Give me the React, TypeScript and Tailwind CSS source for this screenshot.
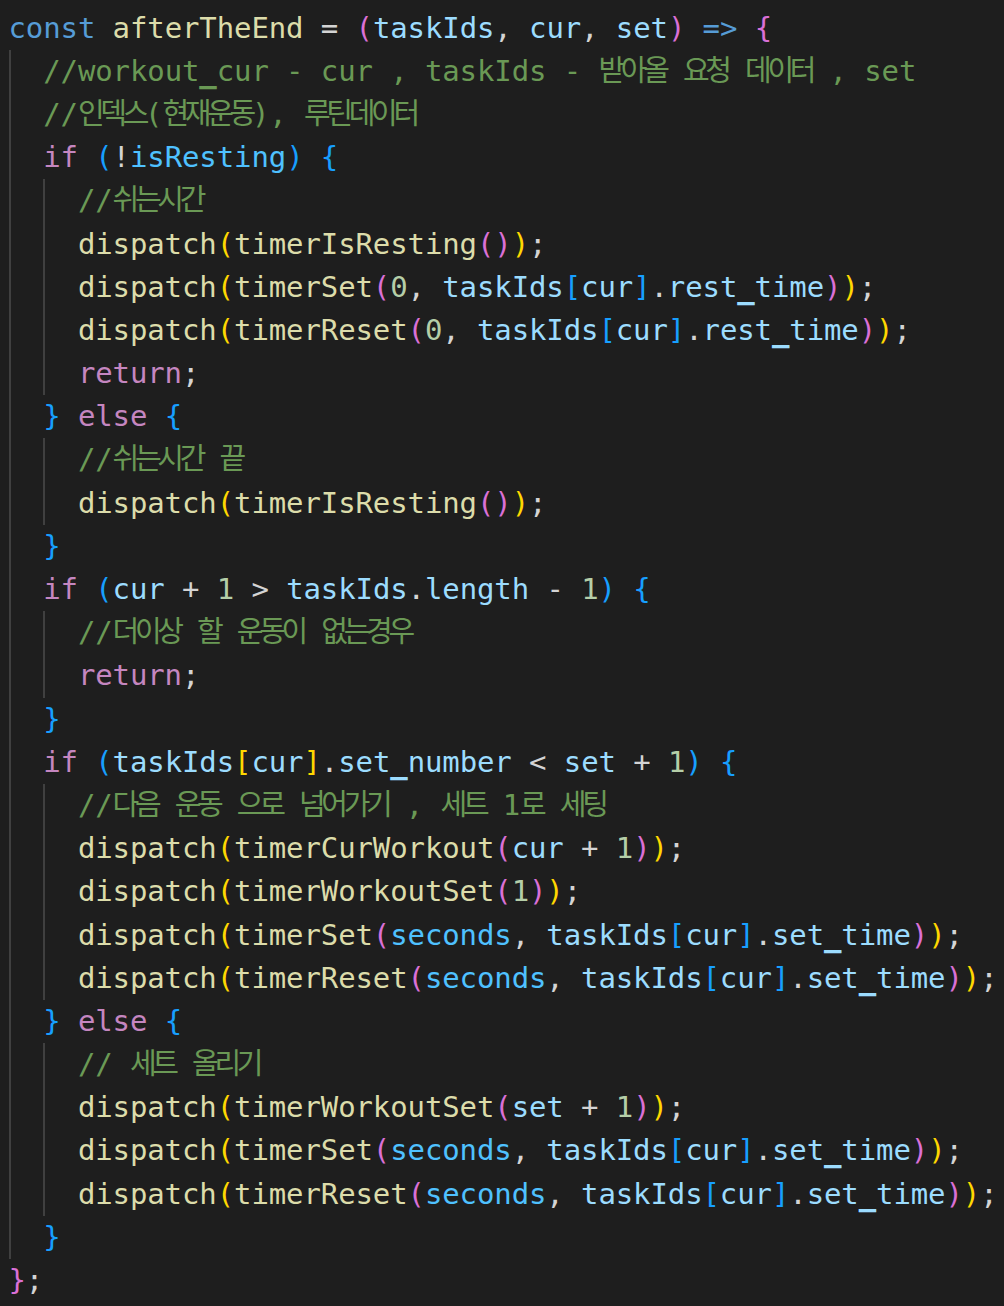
import React from 'react';

type Tok = [string, string];

// VS Code Dark+ token colours
const COLOR: Record<string, string> = {
  k: 'text-[#569cd6]', // const, =>
  c: 'text-[#c586c0]', // if / else / return
  f: 'text-[#dcdcaa]', // functions
  v: 'text-[#9cdcfe]', // variables
  b: 'text-[#4fc1ff]', // constants
  n: 'text-[#b5cea8]', // numbers
  p: 'text-[#d4d4d4]', // punctuation
  g: 'text-[#6a9955]', // comments
  y: 'text-[#ffd700]', // bracket depth gold
  o: 'text-[#da70d6]', // bracket depth orchid
  u: 'text-[#179fff]', // bracket depth blue
};

const SPLIT = /([\uAC00-\uD7A3]+|_)/;
const HANGUL = /[\uAC00-\uD7A3]/;

// hangul runs get narrowed to the editor's cell rhythm, underscores a bit heavier
const renderText = (text: string) =>
  text.split(SPLIT).map((part, i) => {
    if (HANGUL.test(part)) {
      return (
        <span key={i} className="tracking-[-4.3px] leading-[30px]">
          {part}
        </span>
      );
    }
    if (part === '_') {
      return (
        <span key={i} className="[text-shadow:0_1px_0_currentColor,0_-1px_0_currentColor]">
          _
        </span>
      );
    }
    return part;
  });

const dispatchSet = (fn: string, first: Tok, prop: string): Tok[] => [
  ['f', 'dispatch'], ['y', '('], ['f', fn], ['o', '('], first, ['p', ', '],
  ['v', 'taskIds'], ['u', '['], ['v', 'cur'], ['u', ']'], ['p', '.'], ['v', prop],
  ['o', ')'], ['y', ')'], ['p', ';'],
];

const dispatchOne = (fn: string, args: Tok[]): Tok[] => [
  ['f', 'dispatch'], ['y', '('], ['f', fn], ['o', '('], ...args, ['o', ')'], ['y', ')'], ['p', ';'],
];

// [indent guides, tokens]
const lines: [number, Tok[]][] = [
  [0, [['k', 'const'], ['p', ' '], ['f', 'afterTheEnd'], ['p', ' = '], ['o', '('], ['v', 'taskIds'], ['p', ', '], ['v', 'cur'], ['p', ', '], ['v', 'set'], ['o', ')'], ['p', ' '], ['k', '=>'], ['p', ' '], ['o', '{']]],
  [1, [['g', '//workout_cur - cur , taskIds - 받아올 요청 데이터 , set']]],
  [1, [['g', '//인덱스(현재운동), 루틴데이터']]],
  [1, [['c', 'if'], ['p', ' '], ['u', '('], ['p', '!'], ['b', 'isResting'], ['u', ')'], ['p', ' '], ['u', '{']]],
  [2, [['g', '//쉬는시간']]],
  [2, dispatchOne('timerIsResting', [])],
  [2, dispatchSet('timerSet', ['n', '0'], 'rest_time')],
  [2, dispatchSet('timerReset', ['n', '0'], 'rest_time')],
  [2, [['c', 'return'], ['p', ';']]],
  [1, [['u', '}'], ['p', ' '], ['c', 'else'], ['p', ' '], ['u', '{']]],
  [2, [['g', '//쉬는시간 끝']]],
  [2, dispatchOne('timerIsResting', [])],
  [1, [['u', '}']]],
  [1, [['c', 'if'], ['p', ' '], ['u', '('], ['v', 'cur'], ['p', ' + '], ['n', '1'], ['p', ' > '], ['v', 'taskIds'], ['p', '.'], ['v', 'length'], ['p', ' - '], ['n', '1'], ['u', ')'], ['p', ' '], ['u', '{']]],
  [2, [['g', '//더이상 할 운동이 없는경우']]],
  [2, [['c', 'return'], ['p', ';']]],
  [1, [['u', '}']]],
  [1, [['c', 'if'], ['p', ' '], ['u', '('], ['v', 'taskIds'], ['y', '['], ['v', 'cur'], ['y', ']'], ['p', '.'], ['v', 'set_number'], ['p', ' < '], ['v', 'set'], ['p', ' + '], ['n', '1'], ['u', ')'], ['p', ' '], ['u', '{']]],
  [2, [['g', '//다음 운동 으로 넘어가기 , 세트 1로 세팅']]],
  [2, dispatchOne('timerCurWorkout', [['v', 'cur'], ['p', ' + '], ['n', '1']])],
  [2, dispatchOne('timerWorkoutSet', [['n', '1']])],
  [2, dispatchSet('timerSet', ['b', 'seconds'], 'set_time')],
  [2, dispatchSet('timerReset', ['b', 'seconds'], 'set_time')],
  [1, [['u', '}'], ['p', ' '], ['c', 'else'], ['p', ' '], ['u', '{']]],
  [2, [['g', '// 세트 올리기']]],
  [2, dispatchOne('timerWorkoutSet', [['v', 'set'], ['p', ' + '], ['n', '1']])],
  [2, dispatchSet('timerSet', ['b', 'seconds'], 'set_time')],
  [2, dispatchSet('timerReset', ['b', 'seconds'], 'set_time')],
  [1, [['u', '}']]],
  [0, [['o', '}'], ['p', ';']]],
];

const App = () => {
  return (
    <div className="min-h-screen bg-[#1e1e1e] pt-[6.6px] pl-[8.5px] font-['DejaVu_Sans_Mono','Noto_Sans_CJK_KR',monospace] text-[29px] leading-[43.2px] tracking-[-0.11px] text-[#d4d4d4]">
      {lines.map(([depth, toks], i) => (
        <div key={i} className="flex h-[43.2px] items-stretch whitespace-pre">
          {Array.from({ length: depth }).map((_, j) => (
            <div key={j} className="w-[34.7px] shrink-0 border-l-2 border-[#404040]" />
          ))}
          <div>
            {toks.map(([kind, text], j) => (
              <span key={j} className={COLOR[kind]}>
                {renderText(text)}
              </span>
            ))}
          </div>
        </div>
      ))}
    </div>
  );
};

export default App;
